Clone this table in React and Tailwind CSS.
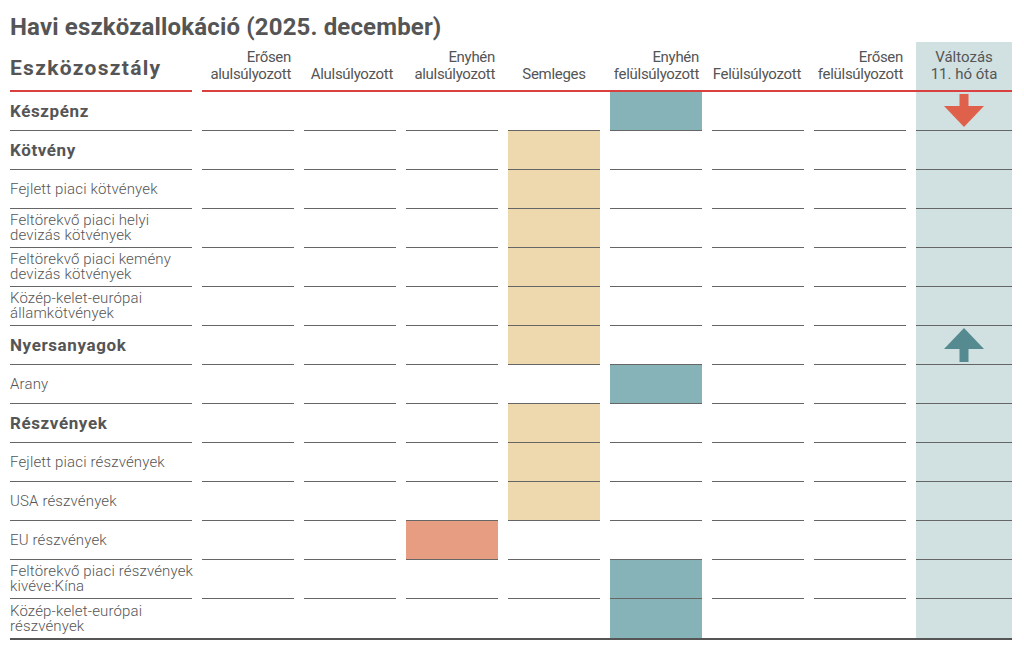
import React from "react";

const TEAL = "bg-[#85b3b7]";
const BEIGE = "bg-[#eed8ad]";
const SALMON = "bg-[#e69d82]";

const headers = [
  { l1: "Erősen", l2: "alulsúlyozott" },
  { l1: "", l2: "Alulsúlyozott" },
  { l1: "Enyhén", l2: "alulsúlyozott" },
  { l1: "", l2: "Semleges", center: true },
  { l1: "Enyhén", l2: "felülsúlyozott" },
  { l1: "", l2: "Felülsúlyozott" },
  { l1: "Erősen", l2: "felülsúlyozott" },
];

const rows = [
  { label: ["Készpénz"], bold: true, col: 4, color: TEAL, arrow: "down" },
  { label: ["Kötvény"], bold: true, col: 3, color: BEIGE },
  { label: ["Fejlett piaci kötvények"], col: 3, color: BEIGE },
  { label: ["Feltörekvő piaci helyi", "devizás kötvények"], col: 3, color: BEIGE },
  { label: ["Feltörekvő piaci kemény", "devizás kötvények"], col: 3, color: BEIGE },
  { label: ["Közép-kelet-európai", "államkötvények"], col: 3, color: BEIGE },
  { label: ["Nyersanyagok"], bold: true, col: 3, color: BEIGE, arrow: "up" },
  { label: ["Arany"], col: 4, color: TEAL },
  { label: ["Részvények"], bold: true, col: 3, color: BEIGE },
  { label: ["Fejlett piaci részvények"], col: 3, color: BEIGE },
  { label: ["USA részvények"], col: 3, color: BEIGE },
  { label: ["EU részvények"], col: 2, color: SALMON },
  { label: ["Feltörekvő piaci részvények", "kivéve:Kína"], col: 4, color: TEAL },
  { label: ["Közép-kelet-európai", "részvények"], col: 4, color: TEAL },
];

const ArrowDown = () => (
  <svg width="40" height="34" viewBox="0 0 40 34">
    <rect x="15.5" y="0" width="9" height="13" fill="#e0614b" />
    <polygon points="0,12 40,12 20,33" fill="#e0614b" />
  </svg>
);

const ArrowUp = () => (
  <svg width="40" height="34" viewBox="0 0 40 34">
    <polygon points="20,0 40,21 0,21" fill="#558a91" />
    <rect x="15.5" y="20" width="9" height="14" fill="#558a91" />
  </svg>
);

export default function App() {
  return (
    <div
      className="w-[1024px] h-[649px] bg-white px-[10px] text-[#555]"
      style={{ fontFamily: "Roboto, 'Liberation Sans', sans-serif" }}
    >
      {/* Title */}
      <div className="h-[42px] pt-[13px]">
        <h1 className="text-[24px] leading-[28px] font-bold tracking-[0.15px] text-[#555]">
          Havi eszközallokáció (2025. december)
        </h1>
      </div>

      <div className="w-[1002px] border-b-2 border-[#555]">
        {/* Header */}
        <div className="grid grid-cols-[182px_810px] gap-x-[10px] h-[50px]">
          <div className="flex items-end pb-[10px] border-b-2 border-[#d94040]">
            <span className="text-[21px] leading-[24px] font-bold tracking-[1.3px]">Eszközosztály</span>
          </div>
          <div className="grid grid-cols-[repeat(7,92px)_96px] gap-x-[10px] border-b-2 border-[#d94040]">
            {headers.map((h, i) => (
              <div
                key={i}
                className={
                  "flex flex-col justify-end pb-[7px] text-[15px] leading-[17px] tracking-[-0.3px] whitespace-nowrap " +
                  (h.center ? "items-center" : "items-end pr-[3px]")
                }
              >
                {h.l1 && <span>{h.l1}</span>}
                <span>{h.l2}</span>
              </div>
            ))}
            <div className="flex flex-col justify-end items-center pb-[7px] text-[15px] leading-[17px] bg-[#d1e1e2]">
              <span>Változás</span>
              <span>11. hó óta</span>
            </div>
          </div>
        </div>

        {/* Rows */}
        {rows.map((r, ri) => {
          const last = ri === rows.length - 1;
          const line = last ? "" : "border-b border-[#666]";
          return (
            <div
              key={ri}
              className="grid grid-cols-[182px_repeat(7,92px)_96px] gap-x-[10px] h-[39px]"
            >
              <div className={"flex flex-col justify-center " + line}>
                {r.bold ? (
                  <span className="text-[17px] leading-[20px] font-bold tracking-[0.6px]">{r.label[0]}</span>
                ) : (
                  r.label.map((t, ti) => (
                    <span
                      key={ti}
                      className="text-[15px] leading-[15px] font-light tracking-[0.15px] whitespace-nowrap"
                    >
                      {t}
                    </span>
                  ))
                )}
              </div>
              {[0, 1, 2, 3, 4, 5, 6].map((c) => (
                <div key={c} className={line + " " + (r.col === c ? r.color : "")} />
              ))}
              <div className={"flex items-center justify-center bg-[#d1e1e2] " + line}>
                {r.arrow === "down" && <ArrowDown />}
                {r.arrow === "up" && <ArrowUp />}
              </div>
            </div>
          );
        })}
      </div>
    </div>
  );
}
